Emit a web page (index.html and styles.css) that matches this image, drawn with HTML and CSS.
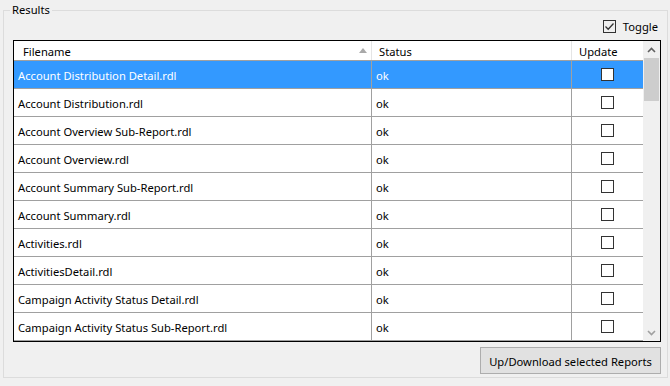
FILE: index.html
```html
<!DOCTYPE html>
<html lang="en">
<head>
  <meta charset="UTF-8">
  <title>Results</title>
  <link rel="stylesheet" href="styles.css">
</head>
<body>

  <!-- Group box -->
  <fieldset class="group">
    <legend class="group-title">Results</legend>

    <div class="toggle-row">
      <label class="toggle">
        <span class="checkbox checked">
          <svg width="11" height="11" viewBox="0 0 11 11"><polyline points="1.5,5.5 4.2,8.2 9.5,2.5" fill="none" stroke="#333" stroke-width="1.3"/></svg>
        </span>
        Toggle
      </label>
    </div>

    <!-- Results grid -->
    <div class="grid">
      <div class="grid-body">
        <div class="row header">
          <div class="cell name">Filename
            <svg class="sort-arrow" width="8" height="5" viewBox="0 0 8 5"><polygon points="0,5 8,5 4,0" fill="#a9a9a9"/></svg>
          </div>
          <div class="cell status">Status</div>
          <div class="cell update">Update</div>
        </div>

        <div class="row selected">
          <div class="cell name">Account Distribution Detail.rdl</div>
          <div class="cell status">ok</div>
          <div class="cell update"><span class="checkbox"></span></div>
        </div>
        <div class="row">
          <div class="cell name">Account Distribution.rdl</div>
          <div class="cell status">ok</div>
          <div class="cell update"><span class="checkbox"></span></div>
        </div>
        <div class="row">
          <div class="cell name">Account Overview Sub-Report.rdl</div>
          <div class="cell status">ok</div>
          <div class="cell update"><span class="checkbox"></span></div>
        </div>
        <div class="row">
          <div class="cell name">Account Overview.rdl</div>
          <div class="cell status">ok</div>
          <div class="cell update"><span class="checkbox"></span></div>
        </div>
        <div class="row">
          <div class="cell name">Account Summary Sub-Report.rdl</div>
          <div class="cell status">ok</div>
          <div class="cell update"><span class="checkbox"></span></div>
        </div>
        <div class="row">
          <div class="cell name">Account Summary.rdl</div>
          <div class="cell status">ok</div>
          <div class="cell update"><span class="checkbox"></span></div>
        </div>
        <div class="row">
          <div class="cell name">Activities.rdl</div>
          <div class="cell status">ok</div>
          <div class="cell update"><span class="checkbox"></span></div>
        </div>
        <div class="row">
          <div class="cell name">ActivitiesDetail.rdl</div>
          <div class="cell status">ok</div>
          <div class="cell update"><span class="checkbox"></span></div>
        </div>
        <div class="row">
          <div class="cell name">Campaign Activity Status Detail.rdl</div>
          <div class="cell status">ok</div>
          <div class="cell update"><span class="checkbox"></span></div>
        </div>
        <div class="row">
          <div class="cell name">Campaign Activity Status Sub-Report.rdl</div>
          <div class="cell status">ok</div>
          <div class="cell update"><span class="checkbox"></span></div>
        </div>
      </div>

      <!-- Scrollbar -->
      <div class="scrollbar">
        <div class="scroll-btn">
          <svg width="9" height="6" viewBox="0 0 9 6"><polyline points="1,5 4.5,1.5 8,5" fill="none" stroke="#606060" stroke-width="1.6"/></svg>
        </div>
        <div class="scroll-track">
          <div class="scroll-thumb"></div>
        </div>
        <div class="scroll-btn">
          <svg width="9" height="6" viewBox="0 0 9 6"><polyline points="1,1 4.5,4.5 8,1" fill="none" stroke="#a0a0a0" stroke-width="1.6"/></svg>
        </div>
      </div>
    </div>

    <div class="actions">
      <button class="action-button">Up/Download selected Reports</button>
    </div>
  </fieldset>

</body>
</html>
```

FILE: styles.css
```css
html, body {
  margin: 0;
  padding: 0;
  height: 100%;
  background: #f0f0f0;
  font-family: "Segoe UI", "Noto Sans", sans-serif;
  font-size: 11.2px;
  color: #000;
  overflow: hidden;
}

/* Group box */
.group {
  margin: 1px 2px 0 3px;
  padding: 0 6px 3px 9px;
  height: 377px;
  box-sizing: border-box;
  border: 1px solid #dcdcdc;
  min-width: 0;
}

.group-title {
  padding: 0 2px;
  margin-left: -3px;
  line-height: 18px;
}

/* Toggle */
.toggle-row {
  display: flex;
  justify-content: flex-end;
  align-items: flex-start;
  padding: 1px 3px 0 0;
  height: 21px;
  box-sizing: border-box;
}

.toggle {
  display: flex;
  align-items: center;
  gap: 7px;
  height: 13px;
}

.checkbox {
  display: inline-flex;
  align-items: center;
  justify-content: center;
  width: 13px;
  height: 13px;
  box-sizing: border-box;
  border: 1px solid #333;
  background: #fff;
}

.toggle .checkbox {
  background: transparent;
}

/* Grid */
.grid {
  display: flex;
  height: 302px;
  box-sizing: border-box;
  border: 1px solid #000;
  background: #fff;
}

.grid-body {
  flex: 1;
  overflow: hidden;
}

.row {
  display: grid;
  grid-template-columns: 358px 200px 70px;
  height: 28px;
  box-sizing: border-box;
  border-bottom: 1px solid #a0a0a0;
}

.row.header {
  height: 20px;
}

.cell {
  display: flex;
  align-items: center;
  padding: 2px 0 0 4px;
  box-sizing: border-box;
  border-right: 1px solid #a0a0a0;
  white-space: nowrap;
  overflow: hidden;
}

.cell.update {
  justify-content: center;
  padding: 0;
  border-right: 0;
}

.header .cell {
  padding: 2px 0 0 7px;
  border-right-color: #e5e5e5;
}

.header .cell.name {
  padding-left: 9px;
  justify-content: space-between;
  padding-right: 4px;
}

.header .cell.update {
  justify-content: flex-start;
}

.sort-arrow {
  margin-bottom: 2px;
}

.row.selected {
  background: #3399ff;
  color: #fff;
}

/* Scrollbar */
.scrollbar {
  width: 17px;
  display: flex;
  flex-direction: column;
  background: #f0f0f0;
}

.scroll-btn {
  height: 17px;
  display: flex;
  align-items: center;
  justify-content: center;
}

.scroll-track {
  flex: 1;
}

.scroll-thumb {
  margin: 0 1px;
  height: 43px;
  background: #cdcdcd;
}

/* Button */
.actions {
  display: flex;
  justify-content: flex-end;
  margin-top: 5px;
}

.action-button {
  width: 181px;
  height: 27px;
  font-family: inherit;
  font-size: 11.2px;
  color: #000;
  background: #e1e1e1;
  border: 1px solid #adadad;
  padding: 1px 0 0;
}
```
